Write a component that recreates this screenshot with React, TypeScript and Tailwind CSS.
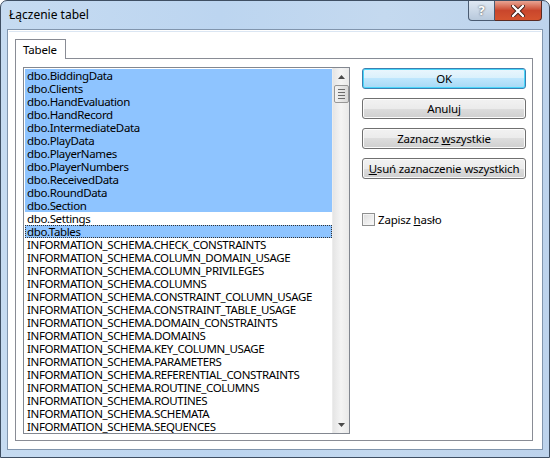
import React from 'react';

const items = [
	'dbo.BiddingData',
	'dbo.Clients',
	'dbo.HandEvaluation',
	'dbo.HandRecord',
	'dbo.IntermediateData',
	'dbo.PlayData',
	'dbo.PlayerNames',
	'dbo.PlayerNumbers',
	'dbo.ReceivedData',
	'dbo.RoundData',
	'dbo.Section',
	'dbo.Settings',
	'dbo.Tables',
	'INFORMATION_SCHEMA.CHECK_CONSTRAINTS',
	'INFORMATION_SCHEMA.COLUMN_DOMAIN_USAGE',
	'INFORMATION_SCHEMA.COLUMN_PRIVILEGES',
	'INFORMATION_SCHEMA.COLUMNS',
	'INFORMATION_SCHEMA.CONSTRAINT_COLUMN_USAGE',
	'INFORMATION_SCHEMA.CONSTRAINT_TABLE_USAGE',
	'INFORMATION_SCHEMA.DOMAIN_CONSTRAINTS',
	'INFORMATION_SCHEMA.DOMAINS',
	'INFORMATION_SCHEMA.KEY_COLUMN_USAGE',
	'INFORMATION_SCHEMA.PARAMETERS',
	'INFORMATION_SCHEMA.REFERENTIAL_CONSTRAINTS',
	'INFORMATION_SCHEMA.ROUTINE_COLUMNS',
	'INFORMATION_SCHEMA.ROUTINES',
	'INFORMATION_SCHEMA.SCHEMATA',
	'INFORMATION_SCHEMA.SEQUENCES',
];

function Button({ children, primary }: { children: React.ReactNode; primary?: boolean }) {
	return (
		<div
			className={
				'h-[21px] w-[164px] rounded-[3px] border flex items-center justify-center text-black whitespace-nowrap ' +
				(primary
					? 'border-[#3c7fb1] shadow-[inset_0_0_0_1px_#48d7fb]'
					: 'border-[#707070] shadow-[inset_0_0_0_1px_#fbfbfb]')
			}
			style={{
				background: primary
					? 'linear-gradient(#eaf6fd 0%, #d9f0fc 50%, #bee6fd 50%, #a7d9f5 100%)'
					: 'linear-gradient(#f2f2f2 0%, #ebebeb 50%, #dddddd 50%, #cfcfcf 100%)',
			}}
		>
			<span>{children}</span>
		</div>
	);
}

export default function App() {
	return (
		<div
			className="w-[550px] h-[458px] flex flex-col rounded-t-[7px] border border-[#3f4f63] text-[11.5px] tracking-[-0.2px] text-black"
			style={{
				fontFamily: '"Noto Sans", "Open Sans", sans-serif',
				background: 'linear-gradient(90deg, #c6dbf1 0%, #bcd5f0 40%, #c4d9ef 70%, #bdd3ec 100%)',
			}}
		>
			{/* title bar */}
			<div className="h-[28px] flex items-start relative">
				<span className="ml-[8px] mt-[5px] text-[12px] tracking-normal">Łączenie tabel</span>
				<div className="absolute right-[7px] top-0 flex">
					<div className="w-[27px] h-[20px] rounded-bl-[4px] border border-t-0 border-[#4a5b72] flex items-center justify-center bg-gradient-to-b from-[#dfe8f3] to-[#b8c9dc] text-white font-bold text-[13px] [text-shadow:0_0_2px_#333]">
						?
					</div>
					<div className="w-[47px] h-[20px] rounded-br-[4px] border border-t-0 border-l-0 border-[#5a2a22] flex items-center justify-center bg-gradient-to-b from-[#e8a493] via-[#c9462c] to-[#d5542f]">
						<svg width="14" height="12" viewBox="0 0 14 12">
							<path d="M2 1 L12 11 M12 1 L2 11" stroke="#3a1a14" strokeWidth="4" strokeLinecap="round" />
							<path d="M2 1 L12 11 M12 1 L2 11" stroke="#ffffff" strokeWidth="2.4" strokeLinecap="round" />
						</svg>
					</div>
				</div>
			</div>
			{/* client */}
			<div className="mx-[6px] mb-[7px] flex-1 border border-[#8195ad] bg-white p-[1px]">
				<div className="h-full border-t border-[#dbe6f3] bg-white pt-[7px] pl-[6px] pr-[8px] pb-[7px] flex flex-col">
					<div className="flex">
						<div className="h-[20px] w-[51px] border border-b-0 border-[#898c95] bg-white flex items-center pl-[7px] -mb-px relative z-10">
							Tabele
						</div>
					</div>
					<div className="flex-1 border border-[#898c95] flex pt-[8px] pl-[7px]">
						{/* listbox */}
						<div className="w-[327px] h-[367px] border border-[#828790] flex px-[1px] pt-[1px]">
							<div className="flex-1 overflow-hidden tracking-[-0.38px]">
								{items.map((it, i) => {
									const sel = i <= 10 || i === 12;
									return (
										<div
											key={it}
											className={
												'h-[13px] leading-[13px] pl-[2px] whitespace-nowrap ' +
												(sel ? 'bg-[#8ec4ff] ' : '') +
												(i === 12 ? 'outline outline-1 outline-dotted outline-[#333] -outline-offset-1' : '')
											}
										>
											{it}
										</div>
									);
								})}
							</div>
							<div className="w-[17px] -mt-[1px] -mr-[1px] border-l border-[#ececec] bg-gradient-to-r from-[#e5e5e5] via-[#f4f4f4] to-[#e9e9e9] flex flex-col items-center">
								<div className="h-[17px] flex items-center justify-center">
									<svg width="7" height="4" viewBox="0 0 7 4">
										<path d="M3.5 0 L7 4 L0 4 Z" fill="#4a4a4a" />
									</svg>
								</div>
								<div className="w-[15px] h-[18px] rounded-[2px] border border-[#979797] bg-gradient-to-r from-[#f3f3f3] to-[#d8d8d8] flex flex-col items-center justify-center gap-[2px]">
									<div className="w-[7px] h-px bg-[#6b6b6b]" />
									<div className="w-[7px] h-px bg-[#6b6b6b]" />
									<div className="w-[7px] h-px bg-[#6b6b6b]" />
									<div className="w-[7px] h-px bg-[#6b6b6b]" />
								</div>
								<div className="flex-1" />
								<div className="h-[17px] flex items-center justify-center">
									<svg width="7" height="4" viewBox="0 0 7 4">
										<path d="M0 0 L7 0 L3.5 4 Z" fill="#4a4a4a" />
									</svg>
								</div>
							</div>
						</div>
						{/* right column */}
						<div className="ml-[12px] pt-[1px] flex flex-col">
							<div className="flex flex-col gap-[9px]">
								<Button primary>OK</Button>
								<Button>Anuluj</Button>
								<Button>
									Zaznacz <span className="underline">w</span>szystkie
								</Button>
								<Button>
									<span className="underline">U</span>suń zaznaczenie wszystkich
								</Button>
							</div>
							<div className="mt-[32px] flex items-center">
								<div className="w-[13px] h-[13px] border border-[#8e8f8f] bg-gradient-to-br from-[#dcdcdc] to-[#fbfbfb] shadow-[inset_0_0_0_1px_#f4f4f4]" />
								<span className="ml-[3px]">
									Zapisz <span className="underline">h</span>asło
								</span>
							</div>
						</div>
					</div>
				</div>
			</div>
		</div>
	);
}
